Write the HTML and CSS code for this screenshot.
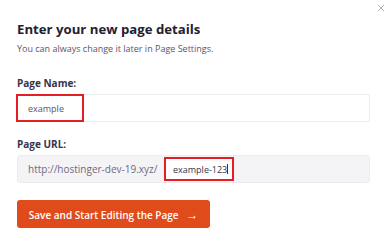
FILE: index.html
```html
<!DOCTYPE html>
<html lang="en">
<head>
    <meta charset="UTF-8">
    <title>New page</title>
    <link rel="stylesheet" href="styles.css">
</head>
<body>
    <div class="modal">
        <button class="close" aria-label="Close">
            <svg viewBox="0 0 8 8" width="8" height="8">
                <path d="M1 1 L7 7 M7 1 L1 7" />
            </svg>
        </button>
        <h2 class="title">Enter your new page details</h2>
        <p class="subtitle">You can always change it later in Page Settings.</p>

        <div class="field">
            <label class="label">Page Name:</label>
            <div class="input">
                <span class="value highlight">example</span>
            </div>
        </div>

        <div class="field">
            <label class="label">Page URL:</label>
            <div class="input url">
                <span class="prefix">http://hostinger-dev-19.xyz/</span>
                <span class="value highlight slug">example-123<span class="caret"></span></span>
            </div>
        </div>

        <button class="save">Save and Start Editing the Page <span class="arrow">&rarr;</span></button>
    </div>
</body>
</html>
```

FILE: styles.css
```css
body {
    margin: 0;
    background: #fff;
    font-family: "Open Sans", sans-serif;
    color: #36344d;
}

.modal {
    position: relative;
    width: 389px;
    height: 247px;
    box-sizing: border-box;
    padding: 19px 19px 0 17px;
    display: flex;
    flex-direction: column;
}

.close {
    position: absolute;
    top: 4px;
    right: 4px;
    width: 8px;
    height: 8px;
    padding: 0;
    border: 0;
    background: none;
}

.close svg {
    display: block;
    stroke: #b9b2c4;
    stroke-width: 1;
}

.title {
    margin: 0;
    font-size: 13.2px;
    line-height: 20px;
    font-weight: 700;
    color: #232031;
}

.subtitle {
    margin: 4px 0 0;
    font-size: 9px;
    line-height: 12px;
    color: #5a5568;
}

.field {
    display: flex;
    flex-direction: column;
    margin-top: 21px;
}

.field + .field {
    margin-top: 15px;
}

.label {
    font-size: 10px;
    line-height: 14px;
    font-weight: 700;
    color: #36344d;
    margin-bottom: 4px;
}

.input {
    display: flex;
    align-items: center;
    height: 28px;
    border: 1px solid #ececf0;
    border-radius: 3px;
    background: #fff;
    box-sizing: border-box;
}

.value {
    font-size: 9px;
    color: #5a5568;
}

.highlight {
    display: flex;
    align-items: center;
    height: 28px;
    box-sizing: border-box;
    border: 2px solid #e51d24;
    margin: -1px 0 -1px -2px;
    padding-left: 10px;
    width: 68px;
}

.url {
    background: #f4f4f6;
    padding-left: 10px;
}

.prefix {
    font-size: 10px;
    color: #6f6a80;
    width: 136px;
}

.slug {
    height: 24px;
    margin: 0;
    width: 70px;
    padding-left: 7px;
    background: #fff;
    color: #36344d;
}

.caret {
    display: inline-block;
    width: 1px;
    height: 10px;
    background: #36344d;
}

.save {
    align-self: flex-start;
    margin-top: 17px;
    width: 193px;
    height: 28px;
    border: 0;
    border-radius: 3px;
    background: #df4b1b;
    color: #fff;
    font-family: "Open Sans", sans-serif;
    font-size: 10px;
    font-weight: 600;
    padding: 0;
    text-align: center;
}

.arrow {
    font-size: 12px;
    margin-left: 5px;
}
```
